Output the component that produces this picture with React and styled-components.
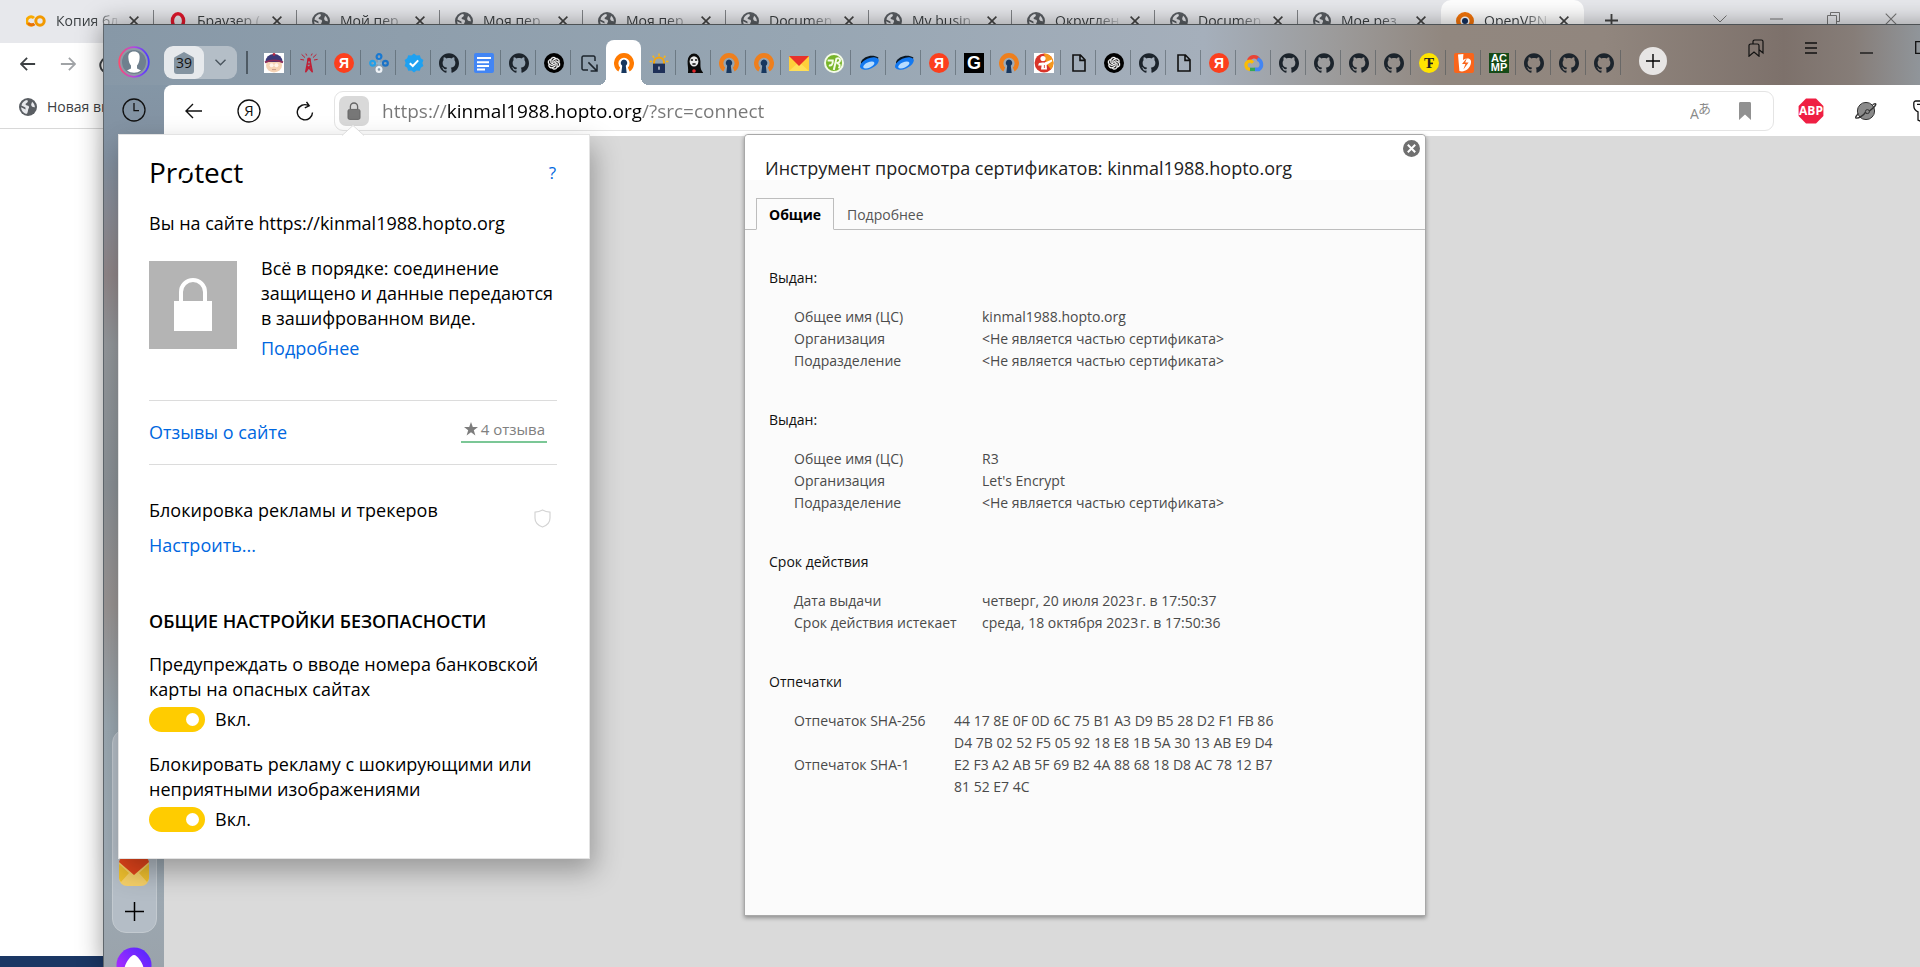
import React from "react";
import styled, { createGlobalStyle, css } from "styled-components";
import { SiGithub } from "react-icons/si";
import { AiOutlineOpenAI } from "react-icons/ai";

const sans = '"Open Sans", "Noto Sans", "Noto Sans CJK JP", sans-serif';

const Global = createGlobalStyle`
  *, *::before, *::after { box-sizing: border-box; }
  body { margin: 0; font-family: ${sans}; font-size: 18px; color: #000; background: #fff; }
  button, input { font-family: inherit; }
  button { border: 0; padding: 0; background: none; color: inherit; cursor: pointer; }
  svg { display: block; flex: none; }
  a { color: #0067e0; text-decoration: none; }
`;

const Desktop = styled.div`
  position: relative;
  height: 100vh;
  min-height: 900px;
  overflow: hidden;
`;

const IconButton = styled.button`
  display: flex;
  align-items: center;
  justify-content: center;
  flex: none;
  width: ${(p) => p.$w || 40}px;
  height: ${(p) => p.$h || 40}px;
`;

/* ---------- window behind ---------- */

const BackWindow = styled.div`
  display: flex;
  flex-direction: column;
  height: 100%;
`;

const BackTabStrip = styled.div`
  display: flex;
  align-items: stretch;
  height: 43px;
  padding-left: 11px;
  background: #e7e8ec;
`;

const BackTab = styled.button`
  position: relative;
  display: flex;
  align-items: center;
  width: 143px;
  padding: 0 15px 2px 15px;
  gap: 10px;
  flex: none;
  font-size: 14px;
  color: #3c4043;
  ${(p) => p.$active && css`background: #fff; border-radius: 10px 10px 0 0;`}
  &::after {
    content: "";
    display: ${(p) => (p.$line ? "block" : "none")};
    position: absolute;
    right: 0;
    top: 10px;
    height: 22px;
    width: 1px;
    background: #808387;
  }
`;

const BackTabTitle = styled.span`
  flex: 1;
  min-width: 0;
  overflow: hidden;
  white-space: nowrap;
  text-align: left;
  mask-image: linear-gradient(to right, #000 60%, rgba(0, 0, 0, 0.1));
`;

const BackControls = styled.div`
  display: flex;
  align-items: center;
  margin-left: auto;
  padding-bottom: 6px;
`;

const BackToolbar = styled.div`
  display: flex;
  align-items: center;
  height: 42px;
  padding-left: 8px;
`;

const BackBookmarks = styled.div`
  display: flex;
  align-items: center;
  height: 44px;
  gap: 10px;
  padding-left: 19px;
  border-bottom: 1px solid #d8d8d8;
  font-size: 14px;
  color: #3c4043;
`;

const BackPage = styled.div`
  flex: 1;
  background: #fff;
  border-bottom: 11px solid #1b3764;
`;

/* ---------- front window ---------- */

const FrontWindow = styled.div`
  position: absolute;
  left: 103px;
  right: -86px;
  top: 24px;
  bottom: 0;
  display: flex;
  flex-direction: column;
  border-left: 1px solid #60676d;
  border-top: 1px solid #4d5255;
  box-shadow: 0 0 24px rgba(0, 0, 0, 0.4);
`;

const TabStrip = styled.div`
  display: flex;
  align-items: stretch;
  height: 60px;
  flex: none;
  background: linear-gradient(to right, #8798a7 0, #8e9eac 300px, #97a6b3 700px, #a5afbb 1100px, #9c9b9b 1230px, #91877f 1340px, #91867e 1500px, #7d716b 1680px, #867d78 1750px, #90959a 1816px, #90959a 100%);
`;

const Profile = styled.div`
  display: flex;
  justify-content: center;
  width: 60px;
  padding-top: 21px;
`;

const TabGroup = styled.div`
  display: flex;
  width: 73px;
  height: 33px;
  margin-top: 21px;
  border-radius: 9px;
  background: #b4bec7;
  overflow: hidden;
`;

const TabCount = styled.button`
  display: flex;
  align-items: center;
  justify-content: center;
  width: 40px;
  border-radius: 9px;
  background: #e6e9ec;
`;

const Divider = styled.div`
  width: 2px;
  height: 23px;
  margin: 26px 9px 0 9px;
  background: #4e5a64;
`;

const TabList = styled.div`
  display: flex;
  margin-left: -1px;
`;

const Tab = styled.button`
  position: relative;
  display: flex;
  align-items: center;
  justify-content: center;
  width: 35px;
  height: 45px;
  margin-top: 15px;
  flex: none;
  ${(p) =>
    p.$active
      ? css`
          background: #fff;
          border-radius: 8px 8px 0 0;
          &::before, &::after {
            content: "";
            position: absolute;
            bottom: 0;
            width: 8px;
            height: 8px;
          }
          &::before { right: 100%; background: radial-gradient(circle at 0 0, transparent 8px, #fff 8px); }
          &::after { left: 100%; background: radial-gradient(circle at 100% 0, transparent 8px, #fff 8px); }
        `
      : css`
          &::after {
            content: "";
            display: ${p.$line ? "block" : "none"};
            position: absolute;
            right: 0;
            top: 10px;
            width: 1px;
            height: 25px;
            background: rgba(60, 70, 78, 0.45);
          }
        `}
`;

const NewTab = styled.button`
  display: flex;
  align-items: center;
  justify-content: center;
  width: 28px;
  height: 28px;
  margin: 22px 0 0 18px;
  border-radius: 50%;
  background: #e7e5e4;
`;

const WindowControls = styled.div`
  display: flex;
  margin: 2px 2px 0 auto;
`;

const Body = styled.div`
  display: flex;
  flex: 1;
  min-height: 0;
  background: linear-gradient(to bottom, #8496a6 0, #8290a0 70px, #8f8587 190px, #92969a 260px, #8a9095 400px, #989392 520px, #9aa7b0 640px, #9eabb5 760px, #9aa3ab 100%);
`;

const Sidebar = styled.div`
  display: flex;
  flex-direction: column;
  align-items: center;
  width: 60px;
  flex: none;
  padding-top: 10px;
  overflow: hidden;
`;

const Dock = styled.div`
  display: flex;
  flex-direction: column;
  align-items: center;
  justify-content: flex-end;
  gap: 10px;
  width: 45px;
  height: 204px;
  margin-top: auto;
  margin-bottom: 14px;
  padding-bottom: 6px;
  flex: none;
  border: 1px solid #c3cad0;
  border-radius: 14px;
  background: #b4bdc6;
`;

const Assistant = styled.button`
  height: 20px;
  flex: none;
`;

const Main = styled.div`
  display: flex;
  flex-direction: column;
  flex: 1;
  min-width: 0;
  border-top-left-radius: 8px;
  background: #fff;
`;

const Toolbar = styled.div`
  display: flex;
  align-items: center;
  height: 51px;
  flex: none;
  padding-right: 58px;
`;

const NavButtons = styled.div`
  display: flex;
  padding-left: 2px;
  width: 170px;
`;

const Omnibox = styled.div`
  display: flex;
  align-items: center;
  flex: 1;
  min-width: 0;
  height: 40px;
  margin-right: 9px;
  padding: 0 6px 0 4px;
  border: 1px solid #e4e4e4;
  border-radius: 9px;
`;

const LockChip = styled.button`
  display: flex;
  align-items: center;
  justify-content: center;
  width: 30px;
  height: 30px;
  flex: none;
  border-radius: 7px;
  background: #d9d9d9;
`;

const Address = styled.input`
  flex: 1;
  min-width: 0;
  height: 34px;
  margin-left: 13px;
  padding: 0;
  border: 0;
  outline: 0;
  font-size: 19px;
  color: transparent;
  background: linear-gradient(to right, #777 0 65px, #000 65px 259px, #777 259px);
  background-clip: text;
  -webkit-background-clip: text;
`;

const Page = styled.div`
  flex: 1;
  background: #dadada;
`;

/* ---------- certificate viewer ---------- */

const Certificate = styled.section`
  position: absolute;
  left: 60px;
  right: 0;
  top: 109px;
  width: 682px;
  margin: 0 auto;
  height: 782px;
  display: flex;
  flex-direction: column;
  border: 1px solid #a8a8a8;
  border-radius: 4px 4px 0 0;
  background: #fbfbfb;
  box-shadow: 0 2px 4px rgba(0, 0, 0, 0.35);
`;

const CertHeader = styled.header`
  position: relative;
  height: 45px;
  flex: none;
  padding: 21px 20px 0;
  background: #fff;
  border-radius: 4px 4px 0 0;
`;

const CertTitle = styled.h1`
  margin: 0;
  font-size: 18px;
  line-height: 25px;
  font-weight: 400;
  color: #222;
`;

const CloseCert = styled.button`
  position: absolute;
  right: 5px;
  top: 5px;
`;

const CertTabs = styled.div`
  display: flex;
  align-items: flex-end;
  height: 50px;
  flex: none;
  padding-left: 11px;
  border-bottom: 1px solid #bdbdbd;
`;

const CertTab = styled.button`
  height: 32px;
  margin-bottom: -1px;
  padding: 0 12px;
  border: 1px solid transparent;
  font-size: 14px;
  color: #555;
  ${(p) =>
    p.$active &&
    css`
      border-color: #bdbdbd;
      border-bottom-color: #fbfbfb;
      color: #000;
      font-weight: 700;
      background: #fbfbfb;
    `}
`;

const CertBody = styled.div`
  padding: 37px 24px 0;
  font-size: 14px;
  line-height: 22px;
`;

const CertGroup = styled.section`
  margin-bottom: 37px;
`;

const CertHeading = styled.h2`
  margin: 0 0 17px;
  font-size: 14px;
  line-height: 22px;
  font-weight: 400;
  color: #111;
`;

const CertTable = styled.table`
  margin-left: 25px;
  border-collapse: collapse;
  color: #4a4a4a;
  th {
    width: ${(p) => p.$label}px;
    padding: 0;
    text-align: left;
    font-weight: 400;
    vertical-align: top;
    white-space: nowrap;
  }
  td { padding: 0; white-space: pre-line; }
`;

/* ---------- protect popup ---------- */

const Popup = styled.section`
  position: absolute;
  left: 14px;
  top: 109px;
  width: 472px;
  padding: 18px 32px 26px 30px;
  display: flex;
  flex-direction: column;
  background: #fff;
  border: 1px solid #e3e3e3;
  line-height: 25px;
  box-shadow: 4px 12px 26px rgba(0, 0, 0, 0.3);
`;

const PopupArrow = styled.svg`
  position: absolute;
  left: 223px;
  top: -10px;
`;

const PopupHeader = styled.header`
  display: flex;
  align-items: center;
  justify-content: space-between;
  height: 38px;
`;

const Brand = styled.h1`
  margin: 0;
  font-size: 28px;
  line-height: 38px;
  font-weight: 400;
`;

const CutLetter = styled.span`
  position: relative;
  &::after {
    content: "";
    position: absolute;
    left: 0;
    top: 21px;
    width: 18px;
    height: 3px;
    background: #fff;
    transform: rotate(-45deg);
  }
`;

const Help = styled.a`
  padding-right: 1px;
  font-size: 17px;
`;

const Site = styled.p`
  margin: 20px 0 25px;
`;

const Status = styled.div`
  display: flex;
  gap: 24px;
  p { margin: -5px 0 5px; white-space: nowrap; }
`;

const StatusIcon = styled.div`
  display: flex;
  align-items: center;
  justify-content: center;
  width: 88px;
  height: 88px;
  flex: none;
  background: #b4b4b4;
`;

const Reviews = styled.div`
  display: flex;
  align-items: center;
  justify-content: space-between;
  height: 65px;
  margin-top: 39px;
  padding-right: 10px;
  border: solid #dcdcdc;
  border-width: 1px 0;
`;

const Rating = styled.div`
  display: flex;
  align-items: center;
  gap: 3px;
  height: 23px;
  margin-bottom: 3px;
  padding: 0 2px 2px 3px;
  border-bottom: 2px solid #7bc796;
  font-size: 15px;
  line-height: 19px;
  color: #808080;
`;

const Blocking = styled.div`
  display: flex;
  justify-content: space-between;
  margin-top: 33px;
  padding-right: 6px;
  p { margin: 0 0 10px; }
  > svg { margin-top: 11px; }
`;

const Heading = styled.h2`
  margin: 51px 0 18px;
  font-size: 18px;
  line-height: 25px;
  font-weight: 600;
  white-space: nowrap;
`;

const Setting = styled.label`
  display: block;
  white-space: nowrap;
  & + & { margin-top: 20px; }
`;

const SwitchRow = styled.span`
  display: flex;
  align-items: center;
  gap: 10px;
  height: 25px;
  margin-top: 5px;
`;

const Switch = styled.input`
  appearance: none;
  width: 56px;
  height: 25px;
  margin: 0;
  border-radius: 13px;
  background: #ccc;
  display: flex;
  align-items: center;
  padding: 0 6px;
  &:checked { background: #ffcc00; justify-content: flex-end; }
  &::before { content: ""; width: 13px; height: 13px; border-radius: 50%; background: #fff; }
`;

/* ---------- icons ---------- */

const Svg = ({ s = 20, w, h, vb, children, ...rest }) => (
  <svg width={w || s} height={h || s} viewBox={vb || `0 0 ${w || s} ${h || s}`} fill="none" aria-hidden="true" {...rest}>
    {children}
  </svg>
);

const Arrow = ({ s = 18, flip, color = "#111", sw = 1.4 }) => (
  <Svg s={s} vb="0 0 18 18" stroke={color} strokeWidth={sw}>
    <path d={flip ? "M1 9H17M10 2L17 9L10 16" : "M17 9H1M8 2L1 9L8 16"} />
  </Svg>
);
const Reload = ({ color = "#111", sw = 1.4 }) => (
  <Svg s={20} stroke={color} strokeWidth={sw}>
    <path d="M17.5 11.5A7.6 7.6 0 1 1 13.2 4.4M11.5 .8L14.2 4.8L9.8 6.8" />
  </Svg>
);
const Cross = ({ s = 10, color = "#444", sw = 1.6 }) => (
  <Svg s={s} vb="0 0 10 10" stroke={color} strokeWidth={sw}><path d="M.6 .6L9.4 9.4M9.4 .6L.6 9.4" /></Svg>
);
const Plus = ({ s = 14, color = "#000", sw = 1.4 }) => (
  <Svg s={s} vb="0 0 14 14" stroke={color} strokeWidth={sw}><path d="M7 0V14M0 7H14" /></Svg>
);
const Globe = () => (
  <Svg s={18}>
    <circle cx="9" cy="9" r="9" fill="#5a5e63" />
    <path d="M8.2 2C9.5 3.4 8.8 4.4 7.4 5.2C6 5.9 6.4 7.2 8 7.4C10 7.6 10.6 9 9.6 10.4C8.8 11.5 9.2 13.4 8 15.8C4.6 15.6 2.2 12.6 2.1 9.2L6.6 11.6L6.4 9.6L2.4 7.4C3.2 4.4 5.4 2.4 8.2 2Z M13 3.8C14.6 5 15.8 6.8 15.9 9.2C14.4 9.6 12.4 8.6 12.2 7C12 5.8 12.9 5.4 13 3.8Z" fill="#e7e8ec" />
  </Svg>
);
const Colab = () => (
  <Svg w={20} h={20}>
    <path d="M8 7A4.2 4.2 0 1 0 8 13" stroke="#f9ab00" strokeWidth="3" />
    <circle cx="14" cy="10" r="4.2" stroke="#f29900" strokeWidth="3" />
    <path d="M2.2 12A4.2 4.2 0 0 0 8.4 12.8" stroke="#e8710a" strokeWidth="3" />
  </Svg>
);
const Opera = () => <Svg s={18}><ellipse cx="9" cy="9" rx="5.6" ry="7.2" stroke="#e0172c" strokeWidth="3.4" /></Svg>;
const OvpnBack = () => (
  <Svg s={18}><circle cx="9" cy="9" r="6.8" stroke="#f5750a" strokeWidth="4.4" /><circle cx="9" cy="9" r="3" fill="#15315f" /></Svg>
);

const Github = () => <SiGithub size={20} color="#1c242c" />;
const OpenVpn = ({ bright }) => (
  <Svg s={20}>
    <path d="M4.4 18.4A10 10 0 1 1 15.6 18.4L13.8 14.4A5.6 5.6 0 1 0 6.2 14.4Z" fill={bright ? "#ff7a00" : "#ee7f1d"} />
    <path d="M10 6.6A3.4 3.4 0 0 1 11.8 12.8L12.7 20H7.3L8.2 12.8A3.4 3.4 0 0 1 10 6.6Z" fill="#17375f" />
  </Svg>
);
const Ya = () => (
  <Svg s={20}>
    <circle cx="10" cy="10" r="10" fill="#fc3f1d" />
    <text x="10" y="15" textAnchor="middle" fontFamily="Liberation Sans, sans-serif" fontSize="14" fontWeight="700" fill="#fff">Я</text>
  </Svg>
);
const Gpt = () => (
  <Svg s={20}>
    <circle cx="10" cy="10" r="10" fill="#000" />
    <AiOutlineOpenAI x="2" y="2" width="16" height="16" size={16} color="#fff" stroke="#fff" strokeWidth="24" />
  </Svg>
);
const Stan = () => (
  <Svg s={20}>
    <rect width="20" height="20" fill="#fff" />
    <ellipse cx="10" cy="12.4" rx="8" ry="7" fill="#f6d3b4" />
    <path d="M1.4 9A8.6 8 0 0 1 18.6 9Z" fill="#3c3a78" />
    <path d="M1 9.4C6 6.8 14 6.8 19 9.4" stroke="#8c2c58" strokeWidth="1.8" />
    <circle cx="10" cy="1.4" r="1.4" fill="#b52a45" />
    <circle cx="7.6" cy="12.2" r="2" fill="#fff3ea" /><circle cx="12.4" cy="12.2" r="2" fill="#fff3ea" />
    <path d="M8 16.6H12" stroke="#c99a86" />
  </Svg>
);
const Radio = () => (
  <Svg s={20} stroke="#c01f35" strokeWidth="1.4">
    <path d="M9 7H11L13.4 19.4M9 7L6.6 19.4M8 11H12M7.4 15H12.6M7 18.6L12.2 11.4M13 18.6L7.8 12.4" />
    <circle cx="10" cy="6.4" r="1.2" fill="#c01f35" />
    <path d="M6 4.6L2.6 1.4M5 7L1.4 6.4M14 4.6L17.4 1.4M15 7L18.6 6.4M7.8 2.6L6.8 .6M12.2 2.6L13.2 .6" strokeWidth="1" />
  </Svg>
);
const Nodes = () => (
  <Svg s={20}>
    <path d="M10 4V16M4 10.4H16" stroke="#8fb3cc" strokeWidth="1.6" />
    <circle cx="10" cy="3.6" r="2.4" stroke="#1979d2" strokeWidth="2.2" />
    <circle cx="3.6" cy="10.2" r="2.4" stroke="#22a0e8" strokeWidth="2.2" />
    <circle cx="16.4" cy="10.2" r="2.4" stroke="#1b72c6" strokeWidth="2.2" />
    <circle cx="10" cy="16.4" r="2.4" stroke="#eef2f6" strokeWidth="2.2" />
  </Svg>
);
const Verified = () => (
  <Svg s={20}>
    <path d="M10 .6L12.6 2.6L15.8 2.2L16.8 5.2L19.4 7L18.4 10L19.4 13L16.8 14.8L15.8 17.8L12.6 17.4L10 19.4L7.4 17.4L4.2 17.8L3.2 14.8L.6 13L1.6 10L.6 7L3.2 5.2L4.2 2.2L7.4 2.6Z" fill="#1fa1f1" />
    <path d="M5.8 10.2L8.8 13L14.2 7.4" stroke="#fff" strokeWidth="2" />
  </Svg>
);
const Docs = () => (
  <Svg s={20}><rect width="20" height="20" rx="2" fill="#4285f4" /><path d="M3 5H17M3 9.2H15M3 13H15M3 16.6H11" stroke="#fff" strokeWidth="2" /></Svg>
);
const Frame = () => (
  <Svg s={20} stroke="#1c242c" strokeWidth="1.5">
    <path d="M16 8V4.4A1.4 1.4 0 0 0 14.6 3H4.4A1.4 1.4 0 0 0 3 4.4V15.6A1.4 1.4 0 0 0 4.4 17H9" /><path d="M9.4 9.4L17.6 17.6M18 11.6V18H11.6" />
  </Svg>
);
const Encrypt = () => (
  <Svg s={20}>
    <path d="M5 11V9.6A5 5 0 0 1 15 9.6V11" stroke="#f5a50c" strokeWidth="2" />
    <path d="M10 .4V3M3.6 2.8L5.2 4.8M16.4 2.8L14.8 4.8M.6 8.4H3M19.4 8.4H17" stroke="#f5b51c" strokeWidth="1.5" />
    <rect x="4" y="10.6" width="12" height="9.4" fill="#1f3058" /><path d="M10 13.4V16.8" stroke="#c8cfdc" strokeWidth="1.4" />
  </Svg>
);
const Ghost = () => (
  <Svg s={20}>
    <path d="M4 20C4.6 16 3.4 12 3.6 8A6.4 7.6 0 0 1 16.4 8C16.6 12 15.8 16 19 19.4V20H1Z" fill="#0a0a0a" />
    <ellipse cx="10" cy="8.4" rx="4.4" ry="5.2" fill="#e9e9e9" /><path d="M6.8 7H9M11 7H13.2M8.4 11H11.6" stroke="#111" strokeWidth="1.4" />
    <circle cx="10" cy="18" r="1.8" fill="#e2262a" />
  </Svg>
);
const MailTab = () => (
  <Svg s={20}><rect y="3" width="20" height="15" fill="#ffcf3a" /><path d="M0 18L10 9L20 18Z" fill="#ffdf57" /><path d="M0 3H20L10 13Z" fill="#e8322b" /></Svg>
);
const Green = () => (
  <Svg s={20}>
    <circle cx="10" cy="10" r="9" stroke="#f4fbe8" strokeWidth="2" fill="#78b52a" />
    <path d="M3.6 7.4H8.8C9 11.6 7.4 13 4.8 12.4M9.8 17L12.4 5.6C16.6 3.6 17.8 9.6 12.6 10.2M12.6 10.2C16.2 10 16.4 13.6 14.6 15.4" stroke="#f4fbe8" strokeWidth="2" />
  </Svg>
);
const Disk = () => (
  <Svg s={20}>
    <path d="M2 9C5 2.6 14 1 19.4 4.6L18 9L2 14Z" fill="#0b1620" />
    <ellipse cx="10.4" cy="10.4" rx="10" ry="5.2" transform="rotate(-24 10.4 10.4)" fill="#1479f0" />
    <ellipse cx="9.8" cy="12" rx="6" ry="2.8" transform="rotate(-24 9.8 12)" fill="#b7dcff" />
  </Svg>
);
const GBox = () => (
  <Svg s={20}><rect width="20" height="20" fill="#000" /><text x="10" y="16" textAnchor="middle" fontFamily="Liberation Sans, sans-serif" fontSize="18" fontWeight="700" fill="#fff">G</text></Svg>
);
const Chef = () => (
  <Svg s={20}>
    <rect width="20" height="20" fill="#fff" /><circle cx="10" cy="10" r="9.4" fill="#d8342a" />
    <path d="M10 .6A9.4 9.4 0 0 1 17 16.4L12 10Z" fill="#f5981e" />
    <circle cx="9" cy="5.6" r="2.6" fill="#fff" /><path d="M5 10L12 9L18 6.4V8.4L12.6 12L13 16.6H7L7.6 12.6L4 12.4Z" fill="#fff" />
    <path d="M8.4 8.6L11 9.2M10.4 12V15" stroke="#d8342a" strokeWidth=".8" />
  </Svg>
);
const FileIcon = () => (
  <Svg s={20} stroke="#111" strokeWidth="1.6"><path d="M4 2H11.4L16 6.8V18H4ZM11 2.4V7.4H15.8" /></Svg>
);
const Cloud = () => (
  <Svg s={20}>
    <path d="M4.6 8A5.6 5.6 0 0 1 15 6.8" stroke="#ea4335" strokeWidth="3.4" /><path d="M13.4 6A5.8 5.8 0 0 1 14.8 16.4H10.6" stroke="#4285f4" strokeWidth="3.6" />
    <path d="M11 16.4H5.4" stroke="#34a853" strokeWidth="3.4" /><path d="M6 16.4A4.2 4.2 0 0 1 4.4 8.4C6.4 7.6 8 8.6 9 9.8" stroke="#fbbc05" strokeWidth="3.2" />
  </Svg>
);
const TIcon = () => (
  <Svg s={20}><circle cx="10" cy="10" r="10" fill="#ffe400" /><text x="10" y="15" textAnchor="middle" fontFamily="Liberation Serif, serif" fontSize="15" fontWeight="700" fill="#222">T</text><path d="M10 10.4H14" stroke="#222" strokeWidth="1.6" /></Svg>
);
const Bolt = () => (
  <Svg s={20}><rect width="20" height="20" rx="2" fill="#f9651b" /><path d="M4 1.6L9.4 1L9 7C15 3.6 18.4 6.6 16.6 11.6C15 16.6 10 19.6 5.4 18Z" fill="#fff" /><path d="M13 4.8L8 11H11.4L9.4 16.6L14.6 9.4H11.2Z" fill="#f9651b" /></Svg>
);
const Acmp = () => (
  <Svg s={20}>
    <rect width="20" height="20" fill="#154a17" />
    <g fontFamily="Liberation Sans, sans-serif" fontSize="11" fontWeight="700" fill="#fff" textAnchor="middle"><text x="10" y="9">AC</text><text x="10" y="18">MP</text></g>
  </Svg>
);

const tabs = [
  Stan, Radio, Ya, Nodes, Verified, Github, Docs, Github, Gpt, Frame, OpenVpn, Encrypt, Ghost, OpenVpn, OpenVpn,
  MailTab, Green, Disk, Disk, Ya, GBox, OpenVpn, Chef, FileIcon, Gpt, Github, FileIcon, Ya, Cloud, Github, Github,
  Github, Github, TIcon, Bolt, Acmp, Github, Github, Github,
];
const activeTab = 10;

const backTabs = [
  ["Копия бл", Colab], ["Браузер (", Opera], ["Мой пер", Globe], ["Моя пер", Globe], ["Моя пер", Globe],
  ["Documen", Globe], ["My busin", Globe], ["Округлен", Globe], ["Documen", Globe], ["Мое рез", Globe],
  ["OpenVPN", OvpnBack],
];

const none = "<Не является частью сертификата>";
const groups = [
  { title: "Выдан:", label: 188, rows: [["Общее имя (ЦС)", "kinmal1988.hopto.org"], ["Организация", none], ["Подразделение", none]] },
  { title: "Выдан:", label: 188, rows: [["Общее имя (ЦС)", "R3"], ["Организация", "Let's Encrypt"], ["Подразделение", none]] },
  { title: "Срок действия", label: 188, rows: [["Дата выдачи", "четверг, 20 июля 2023\u202fг. в 17:50:37"], ["Срок действия истекает", "среда, 18 октября 2023\u202fг. в 17:50:36"]] },
  {
    title: "Отпечатки", label: 160, rows: [
      ["Отпечаток SHA-256", "44 17 8E 0F 0D 6C 75 B1 A3 D9 B5 28 D2 F1 FB 86\nD4 7B 02 52 F5 05 92 18 E8 1B 5A 30 13 AB E9 D4"],
      ["Отпечаток SHA-1", "E2 F3 A2 AB 5F 69 B2 4A 88 68 18 D8 AC 78 12 B7\n81 52 E7 4C"],
    ],
  },
];

function Background() {
  return (
    <BackWindow>
      <BackTabStrip>
        {backTabs.map(([title, Icon], i) => (
          <BackTab key={i} $active={i === 10} $line={i < 9}>
            <Icon />
            <BackTabTitle>{title}</BackTabTitle>
            <Cross />
          </BackTab>
        ))}
        <IconButton $w={54} $h={41} aria-label="Новая вкладка"><Plus s={13} color="#444" sw={2} /></IconButton>
        <BackControls>
          <IconButton $w={57} $h={36} aria-label="Поиск вкладок"><Svg w={14} h={8} stroke="#777"><path d="M.5 .5L7 7L13.5 .5" /></Svg></IconButton>
          <IconButton $w={57} $h={36} aria-label="Свернуть"><Svg w={13} h={2} stroke="#777"><path d="M0 1H13" /></Svg></IconButton>
          <IconButton $w={57} $h={36} aria-label="Развернуть"><Svg s={13} stroke="#777"><path d="M.5 3.5H9.5V12.5H.5ZM3.5 3.5V.5H12.5V9.5H9.5" /></Svg></IconButton>
          <IconButton $w={58} $h={36} aria-label="Закрыть"><Cross s={12} color="#777" sw={0.9} /></IconButton>
        </BackControls>
      </BackTabStrip>
      <BackToolbar>
        <IconButton aria-label="Назад"><Arrow s={16} color="#3c4043" sw={2} /></IconButton>
        <IconButton aria-label="Вперёд"><Arrow s={16} flip color="#a0a3a6" sw={2} /></IconButton>
        <IconButton aria-label="Обновить"><Reload color="#3c4043" sw={2} /></IconButton>
      </BackToolbar>
      <BackBookmarks><Globe />Новая вк</BackBookmarks>
      <BackPage />
    </BackWindow>
  );
}

function Strip() {
  return (
    <TabStrip>
      <Profile>
        <Svg s={32}>
          <defs><linearGradient id="ring" x1="0" y1="0" x2="1" y2="0"><stop stopColor="#ff4a6e" /><stop offset=".5" stopColor="#b14be0" /><stop offset="1" stopColor="#4a3cff" /></linearGradient></defs>
          <circle cx="16" cy="16" r="14.8" fill="#8e9ba6" stroke="url(#ring)" strokeWidth="1.8" />
          <circle cx="16" cy="16" r="12" fill="#6f808e" />
          <path d="M16 5.6C20 5.6 22 8 21.6 12C21.4 15.4 20.4 18 19 19.6V22.6L23 24.6A12 12 0 0 1 9 24.6L13 22.6V19.6C11.6 18 10.6 15.4 10.4 12C10 8 12 5.6 16 5.6Z" fill="#fff" />
        </Svg>
      </Profile>
      <TabGroup>
        <TabCount>
          <Svg w={22} h={24}>
            <path d="M11 1L20 6A2 2 0 0 1 21 8V20A3 3 0 0 1 18 23H4A3 3 0 0 1 1 20V8A2 2 0 0 1 2 6Z" fill="#8494a1" />
            <text x="11" y="17" textAnchor="middle" fontFamily="Open Sans, sans-serif" fontSize="14" fill="#111">39</text>
          </Svg>
        </TabCount>
        <IconButton $w={33} $h={33} aria-label="Группы вкладок"><Svg w={11} h={7} stroke="#4a555e" strokeWidth="1.4"><path d="M.5 .8L5.5 5.8L10.5 .8" /></Svg></IconButton>
      </TabGroup>
      <Divider />
      <TabList>
        {tabs.map((Icon, i) => (
          <Tab key={i} $active={i === activeTab} $line={i !== activeTab - 1}>
            <Icon {...(i === activeTab ? { bright: true } : {})} />
          </Tab>
        ))}
      </TabList>
      <NewTab aria-label="Новая вкладка"><Plus s={14} /></NewTab>
      <WindowControls>
        <IconButton $w={54} $h={41} aria-label="Закладки">
          <Svg w={16} h={18} stroke="#111" strokeWidth="1.2"><path d="M1 6.6A1.6 1.6 0 0 1 2.6 5H9.4A1.6 1.6 0 0 1 11 6.6V17.2L6 13L1 17.2ZM5 4.6V2.6A1.6 1.6 0 0 1 6.6 1H13.4A1.6 1.6 0 0 1 15 2.6V14L11.4 11" /></Svg>
        </IconButton>
        <IconButton $w={56} $h={41} aria-label="Меню"><Svg w={12} h={12} stroke="#111" strokeWidth="1.3"><path d="M0 1H12M0 6H12M0 11H12" /></Svg></IconButton>
        <IconButton $w={55} $h={52} aria-label="Свернуть"><Svg w={13} h={2} stroke="#111" strokeWidth="1.3"><path d="M0 1H13" /></Svg></IconButton>
        <IconButton $w={55} $h={41} aria-label="Развернуть"><Svg w={14} h={13} stroke="#111" strokeWidth="1.3"><path d="M.7 .7H13.3V12.3H.7Z" /></Svg></IconButton>
        <IconButton $w={55} $h={41} aria-label="Закрыть"><Cross s={13} color="#111" sw={1} /></IconButton>
      </WindowControls>
    </TabStrip>
  );
}

function AddressBar() {
  return (
    <Toolbar>
      <NavButtons>
        <IconButton $w={55} aria-label="Назад"><Arrow /></IconButton>
        <IconButton $w={56} aria-label="Яндекс">
          <Svg s={24}><circle cx="12" cy="12" r="11" stroke="#111" strokeWidth="1.3" /><text x="12" y="17" textAnchor="middle" fontFamily="Open Sans, sans-serif" fontSize="15" fill="#111">Я</text></Svg>
        </IconButton>
        <IconButton $w={55} aria-label="Обновить"><Reload /></IconButton>
      </NavButtons>
      <Omnibox>
        <LockChip aria-label="Защита">
          <Svg w={14} h={18}><rect x="1" y="7.4" width="12" height="10" rx="1.6" fill="#777" stroke="#666" /><path d="M3.4 7V4.6A3.6 3.6 0 0 1 10.6 4.6V7" stroke="#666" strokeWidth="1.3" /></Svg>
        </LockChip>
        <Address aria-label="Адрес" defaultValue="https://kinmal1988.hopto.org/?src=connect" />
        <IconButton $w={44} aria-label="Перевести">
          <Svg w={22} h={20} fill="#8a8a8a">
            <text x="0" y="18" fontFamily="Open Sans, sans-serif" fontSize="14">A</text>
            <text x="8" y="12" fontFamily="Noto Sans CJK JP, sans-serif" fontSize="13">あ</text>
          </Svg>
        </IconButton>
        <IconButton $w={44} aria-label="В закладки"><Svg w={12} h={18}><path d="M0 1.4A1.4 1.4 0 0 1 1.4 0H10.6A1.4 1.4 0 0 1 12 1.4V18L6 12.6L0 18Z" fill="#919191" /></Svg></IconButton>
      </Omnibox>
      <IconButton $w={55} aria-label="Adblock Plus">
        <Svg s={26}>
          <path d="M8 .6H18L25.4 8V18L18 25.4H8L.6 18V8Z" fill="#ef1f43" />
          <text x="13" y="17" textAnchor="middle" fontFamily="Open Sans, sans-serif" fontSize="12" fontWeight="700" fill="#fff">ABP</text>
        </Svg>
      </IconButton>
      <IconButton $w={55} aria-label="Расширение">
        <Svg s={22}><circle cx="11" cy="11" r="8.6" fill="#8a8a8a" stroke="#333" /><path d="M3.4 13.4C1.2 15.6 .2 17.4 1 18C3.6 18.6 9 15 11 11.6" stroke="#333" strokeWidth="1.4" /><path d="M11 13.4C15 11 21 6 20.8 4C20.4 3.2 18.6 4 17.6 4.8" stroke="#333" strokeWidth="1.4" /><circle cx="12.4" cy="11.6" r="2" stroke="#333" fill="#8a8a8a" /></Svg>
      </IconButton>
      <IconButton $w={55} aria-label="Пароли">
        <Svg w={16} h={24} stroke="#111" strokeWidth="1.3"><path d="M5 21V12.8C2 11.6 .8 9.4 .8 6.8V4A2 2 0 0 1 2.8 2H13.2A2 2 0 0 1 15.2 4V6.8C15.2 9.4 14 11.6 11 12.8V20L8 22.4ZM4 5.4H12" /></Svg>
      </IconButton>
    </Toolbar>
  );
}

function CertificateViewer() {
  return (
    <Certificate>
      <CertHeader>
        <CertTitle>Инструмент просмотра сертификатов: kinmal1988.hopto.org</CertTitle>
        <CloseCert aria-label="Закрыть">
          <Svg s={17}><circle cx="8.5" cy="8.5" r="8.5" fill="#707070" /><path d="M4.8 4.8L12.2 12.2M12.2 4.8L4.8 12.2" stroke="#fff" strokeWidth="2" /></Svg>
        </CloseCert>
      </CertHeader>
      <CertTabs>
        <CertTab $active>Общие</CertTab>
        <CertTab>Подробнее</CertTab>
      </CertTabs>
      <CertBody>
        {groups.map((g, i) => (
          <CertGroup key={i}>
            <CertHeading>{g.title}</CertHeading>
            <CertTable $label={g.label}>
              <tbody>
                {g.rows.map(([k, v]) => (
                  <tr key={k}><th scope="row">{k}</th><td>{v}</td></tr>
                ))}
              </tbody>
            </CertTable>
          </CertGroup>
        ))}
      </CertBody>
    </Certificate>
  );
}

function SwitchSetting({ children }) {
  return (
    <Setting>
      {children}
      <SwitchRow><Switch type="checkbox" defaultChecked />Вкл.</SwitchRow>
    </Setting>
  );
}

function Protect() {
  return (
    <Popup>
      <PopupArrow width="22" height="11" viewBox="0 0 22 11" aria-hidden="true">
        <path d="M0 10.5L11 0L22 10.5V11H0Z" fill="#fff" /><path d="M0 10.5L11 .5L22 10.5" fill="none" stroke="#dcdcdc" />
      </PopupArrow>
      <PopupHeader>
        <Brand>Pr<CutLetter>o</CutLetter>tect</Brand>
        <Help href="#help">?</Help>
      </PopupHeader>
      <Site>Вы на сайте https://kinmal1988.hopto.org</Site>
      <Status>
        <StatusIcon>
          <Svg w={38} h={54}><rect y="23" width="38" height="30" fill="#fff" /><path d="M7 24V14A12 12 0 0 1 31 14V24" stroke="#fff" strokeWidth="4" /></Svg>
        </StatusIcon>
        <div>
          <p>Всё в порядке: соединение<br />защищено и данные передаются<br />в зашифрованном виде.</p>
          <a href="#details">Подробнее</a>
        </div>
      </Status>
      <Reviews>
        <a href="#reviews">Отзывы о сайте</a>
        <Rating>
          <Svg s={14} vb="0 0 14 14"><path d="M7 0L8.8 5H14L9.8 8.2L11.4 13.4L7 10.2L2.6 13.4L4.2 8.2L0 5H5.2Z" fill="#7d7d7d" /></Svg>
          4 отзыва
        </Rating>
      </Reviews>
      <Blocking>
        <div>
          <p>Блокировка рекламы и трекеров</p>
          <a href="#configure">Настроить...</a>
        </div>
        <Svg w={17} h={19} stroke="#d4d4d4" strokeWidth="1.2"><path d="M8.5 1C11 2.4 13.4 3 16 3.2V9C16 13.4 12.4 16.6 8.5 18C4.6 16.6 1 13.4 1 9V3.2C3.6 3 6 2.4 8.5 1Z" /></Svg>
      </Blocking>
      <Heading>ОБЩИЕ НАСТРОЙКИ БЕЗОПАСНОСТИ</Heading>
      <SwitchSetting>Предупреждать о вводе номера банковской<br />карты на опасных сайтах</SwitchSetting>
      <SwitchSetting>Блокировать рекламу с шокирующими или<br />неприятными изображениями</SwitchSetting>
    </Popup>
  );
}

export default function App() {
  return (
    <>
      <Global />
      <Desktop>
        <Background />
        <FrontWindow>
          <Strip />
          <Body>
            <Sidebar>
              <IconButton $w={30} $h={30} aria-label="История">
                <Svg s={24} stroke="#111" strokeWidth="1.3"><circle cx="12" cy="12" r="11" /><path d="M12 5V12.6H17" /></Svg>
              </IconButton>
              <Dock>
                <IconButton $w={30} $h={30} aria-label="Почта">
                  <Svg s={30}>
                    <rect width="30" height="30" rx="8" fill="#f6d068" />
                    <path d="M0 8L10 17L2 26A8 8 0 0 1 0 22ZM30 8L20 17L28 26A8 8 0 0 0 30 22Z" fill="#eebf2e" />
                    <path d="M0 6A7 7 0 0 1 7 0H23A7 7 0 0 1 30 6L15 19Z" fill="#e2441b" />
                  </Svg>
                </IconButton>
                <IconButton $w={30} $h={30} aria-label="Добавить"><Plus s={19} sw={1.1} /></IconButton>
              </Dock>
              <Assistant aria-label="Алиса">
                <Svg s={36}>
                  <defs><linearGradient id="alice" x1="0" y1="1" x2="1" y2="0"><stop stopColor="#c42bff" /><stop offset="1" stopColor="#4a28ff" /></linearGradient></defs>
                  <circle cx="18" cy="18" r="17.5" fill="url(#alice)" />
                  <path d="M18 8C21.6 8 27.6 17.6 27.6 22C27.6 26 22.8 27.4 18 27.4C13.2 27.4 8.4 26 8.4 22C8.4 17.6 14.4 8 18 8Z" fill="#fff" />
                </Svg>
              </Assistant>
            </Sidebar>
            <Main>
              <AddressBar />
              <Page />
            </Main>
          </Body>
          <CertificateViewer />
          <Protect />
        </FrontWindow>
      </Desktop>
    </>
  );
}
